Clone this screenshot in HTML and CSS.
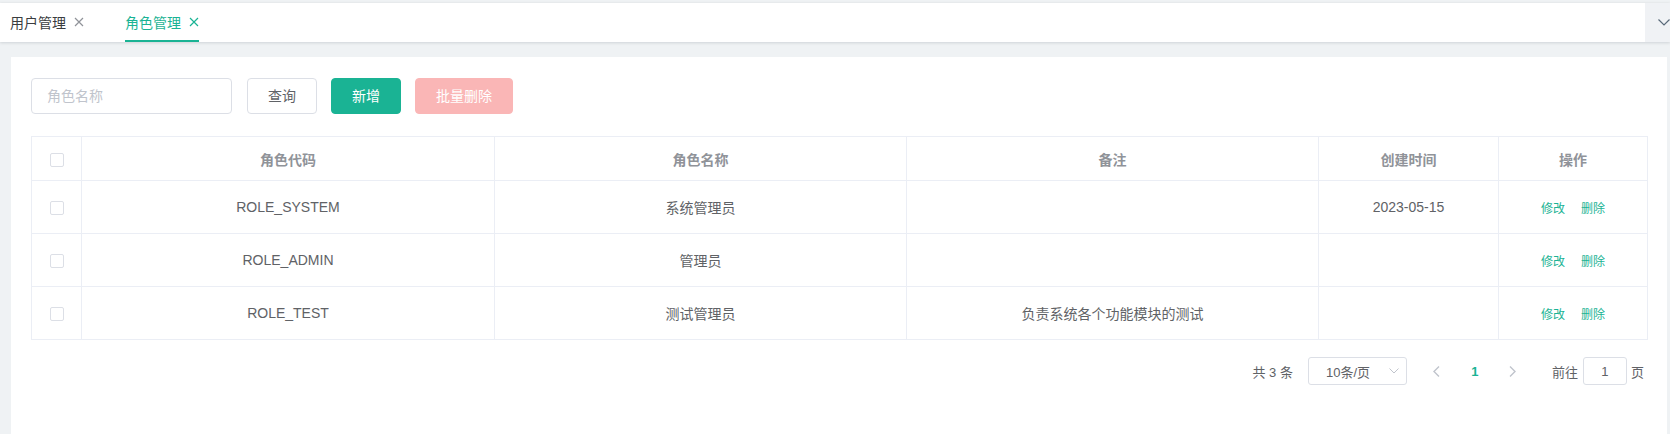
FILE: index.html
```html
<!DOCTYPE html>
<html lang="zh-CN">
<head>
<meta charset="utf-8">
<title>角色管理</title>
<link rel="stylesheet" href="styles.css">
</head>
<body>
<div class="tabs-bar">
  <div class="tabs">
    <div class="tab">
      <span>用户管理</span>
      <svg class="close" width="10" height="10" viewBox="0 0 10 10"><path d="M1 1 L9 9 M9 1 L1 9" stroke="currentColor" stroke-width="1.2" fill="none"/></svg>
    </div>
    <div class="tab active">
      <span>角色管理</span>
      <svg class="close" width="10" height="10" viewBox="0 0 10 10"><path d="M1 1 L9 9 M9 1 L1 9" stroke="currentColor" stroke-width="1.2" fill="none"/></svg>
    </div>
  </div>
  <div class="more">
    <svg width="12" height="7" viewBox="0 0 12 7"><path d="M0.5 0.5 L6 6 L11.5 0.5" stroke="#5a6a7a" stroke-width="1.2" fill="none"/></svg>
  </div>
</div>

<div class="card">
  <div class="toolbar">
    <input class="search-input" type="text" placeholder="角色名称">
    <div class="btns">
      <button class="btn">查询</button>
      <button class="btn btn-primary">新增</button>
      <button class="btn btn-danger-disabled">批量删除</button>
    </div>
  </div>

  <table class="grid">
    <colgroup>
      <col class="c-check">
      <col class="c-code">
      <col class="c-name">
      <col class="c-remark">
      <col class="c-time">
      <col class="c-ops">
    </colgroup>
    <thead>
      <tr>
        <th><span class="checkbox"></span></th>
        <th>角色代码</th>
        <th>角色名称</th>
        <th>备注</th>
        <th>创建时间</th>
        <th>操作</th>
      </tr>
    </thead>
    <tbody>
      <tr>
        <td><span class="checkbox"></span></td>
        <td>ROLE_SYSTEM</td>
        <td>系统管理员</td>
        <td></td>
        <td>2023-05-15</td>
        <td><span class="ops"><a class="link">修改</a><a class="link">删除</a></span></td>
      </tr>
      <tr>
        <td><span class="checkbox"></span></td>
        <td>ROLE_ADMIN</td>
        <td>管理员</td>
        <td></td>
        <td></td>
        <td><span class="ops"><a class="link">修改</a><a class="link">删除</a></span></td>
      </tr>
      <tr>
        <td><span class="checkbox"></span></td>
        <td>ROLE_TEST</td>
        <td>测试管理员</td>
        <td>负责系统各个功能模块的测试</td>
        <td></td>
        <td><span class="ops"><a class="link">修改</a><a class="link">删除</a></span></td>
      </tr>
    </tbody>
  </table>

  <div class="pagination">
    <span class="total">共 3 条</span>
    <div class="size-select">
      <span>10条/页</span>
      <svg width="10" height="6" viewBox="0 0 10 6"><path d="M0.5 0.5 L5 5 L9.5 0.5" stroke="#c0c4cc" stroke-width="1" fill="none"/></svg>
    </div>
    <span class="pg-btn">
      <svg width="7" height="11" viewBox="0 0 7 11"><path d="M6 0.5 L1 5.5 L6 10.5" stroke="#c0c4cc" stroke-width="1.4" fill="none"/></svg>
    </span>
    <span class="pg-btn pg-num">1</span>
    <span class="pg-btn">
      <svg width="7" height="11" viewBox="0 0 7 11"><path d="M1 0.5 L6 5.5 L1 10.5" stroke="#c0c4cc" stroke-width="1.4" fill="none"/></svg>
    </span>
    <span class="jumper">
      <span>前往</span>
      <span class="jump-input">1</span>
      <span>页</span>
    </span>
  </div>
</div>
</body>
</html>
```

FILE: styles.css
```css
html, body {
  margin: 0;
  padding: 0;
}
body {
  background: #eff2f4;
  font-family: "Liberation Sans", "Noto Sans CJK SC", sans-serif;
  color: #606266;
  overflow: hidden;
  height: 434px;
  padding-top: 3px;
  box-sizing: border-box;
}

.tabs-bar {
  height: 39px;
  background: #fff;
  display: flex;
  box-shadow: 0 1px 3px rgba(0, 21, 41, 0.12), 0 0 3px rgba(0, 0, 0, 0.04);
  position: relative;
}
.tabs {
  flex: 1;
  display: flex;
  gap: 41px;
  padding-left: 10px;
}
.tab {
  display: flex;
  align-items: center;
  gap: 8px;
  font-size: 14px;
  color: #3a3c40;
  box-sizing: border-box;
  height: 39px;
  padding-top: 1px;
  border-bottom: 2px solid transparent;
}
.tab .close {
  color: #909399;
}
.tab.active {
  color: #1ab394;
  border-bottom-color: #1ab394;
}
.tab.active .close {
  color: #1ab394;
}
.more {
  width: 25px;
  background: #f0f2f5;
  display: flex;
  align-items: center;
  box-sizing: border-box;
  padding-left: 13px;
  overflow: hidden;
}

.card {
  margin: 15px 3px 0 11px;
  background: #fff;
  padding: 21px 20px 0;
  height: 377px;
  box-sizing: border-box;
}

.toolbar {
  display: flex;
  align-items: center;
  gap: 15px;
}
.search-input {
  width: 201px;
  height: 36px;
  box-sizing: border-box;
  border: 1px solid #dcdfe6;
  border-radius: 4px;
  padding: 0 15px;
  font-size: 14px;
  font-family: "Liberation Sans", "Noto Sans CJK SC", sans-serif;
  color: #606266;
  outline: none;
}
.search-input::placeholder {
  color: #c0c4cc;
}
.btns {
  display: flex;
  gap: 14px;
}
.btn {
  height: 36px;
  box-sizing: border-box;
  padding: 0 20px;
  border: 1px solid #dcdfe6;
  border-radius: 4px;
  background: #fff;
  color: #606266;
  font-size: 14px;
  font-family: "Liberation Sans", "Noto Sans CJK SC", sans-serif;
  line-height: 1;
}
.btn-primary {
  background: #1ab394;
  border-color: #1ab394;
  color: #fff;
}
.btn-danger-disabled {
  background: #fab6b6;
  border-color: #fab6b6;
  color: #fff;
}

.grid {
  margin-top: 22px;
  width: 100%;
  table-layout: fixed;
  border-collapse: collapse;
  border: 1px solid #ebeef5;
  font-size: 14px;
}
.c-check { width: 50px; }
.c-code { width: 413px; }
.c-name { width: 412px; }
.c-remark { width: 412px; }
.c-time { width: 180px; }
.c-ops { width: 149px; }
.grid th, .grid td {
  border: 1px solid #ebeef5;
  text-align: center;
  padding: 0;
}
.grid th {
  height: 43px;
  color: #909399;
  font-weight: bold;
}
.grid td {
  height: 52px;
  color: #606266;
}
.checkbox {
  display: inline-block;
  width: 14px;
  height: 14px;
  box-sizing: border-box;
  border: 1px solid #dcdfe6;
  border-radius: 2px;
  background: #fff;
  vertical-align: middle;
}
.ops {
  display: inline-flex;
  gap: 16px;
  font-size: 12px;
  padding-top: 1px;
}
.link {
  color: #1ab394;
  cursor: pointer;
}

.pagination {
  margin-top: 17px;
  display: flex;
  justify-content: flex-end;
  align-items: center;
  height: 28px;
  font-size: 13px;
  color: #606266;
  padding-right: 3px;
}
.total {
  margin-right: 15px;
}
.size-select {
  width: 99px;
  height: 28px;
  box-sizing: border-box;
  border: 1px solid #dcdfe6;
  border-radius: 3px;
  display: flex;
  align-items: center;
  justify-content: space-between;
  padding: 0 7px 0 17px;
  margin-right: 11px;
}
.pg-btn {
  width: 38px;
  height: 28px;
  display: flex;
  align-items: center;
  justify-content: center;
}
.pg-num {
  color: #1ab394;
  font-weight: bold;
}
.jumper {
  margin-left: 20px;
  display: flex;
  align-items: center;
}
.jump-input {
  width: 44px;
  height: 28px;
  box-sizing: border-box;
  border: 1px solid #dcdfe6;
  border-radius: 3px;
  margin: 0 4px 0 5px;
  display: flex;
  align-items: center;
  justify-content: center;
}
```
